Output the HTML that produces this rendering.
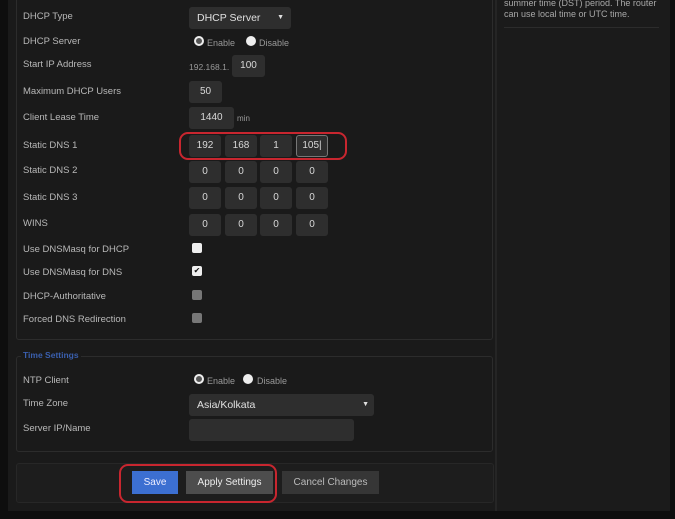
<!DOCTYPE html>
<html><head><style>
*{margin:0;padding:0;box-sizing:border-box}
body{width:675px;height:519px;background:#0e0e0e;position:relative;overflow:hidden;font-family:"Liberation Sans",sans-serif;color:#bdbdbd}
.a{position:absolute}
.lbl{position:absolute;left:23px;font-size:9.5px;color:#b8b8b8}
.in{position:absolute;background:#2e2e2e;border-radius:3px;color:#d8d8d8;font-size:10px;text-align:center;height:22px;line-height:22px}
.cb{position:absolute;left:192px;width:10px;height:10px;border-radius:2px;background:#777}
.rd{position:absolute;width:10px;height:10px;border-radius:50%;background:#eee}
.rt{position:absolute;font-size:9px;color:#999}
.red{position:absolute;border:2px solid #c8262f;border-radius:9px}
</style></head><body>
<div class="a" style="left:8px;top:0;width:487px;height:511px;background:#1a1a1a"></div>
<div class="a" style="left:495px;top:0;width:175px;height:511px;background:#1b1b1b;border-left:2px solid #252525"></div>
<div class="a" style="left:504px;top:-2px;font-size:9px;color:#a8a8a8;line-height:11px">summer time (DST) period. The router<br>can use local time or UTC time.</div>
<div class="a" style="left:504px;top:27px;width:155px;height:1px;background:#2c2c2c"></div>
<div class="a" style="left:16px;top:-5px;width:477px;height:345px;border:1px solid #2c2c2c;border-radius:3px"></div>
<div class="a" style="left:16px;top:356px;width:477px;height:96px;border:1px solid #2c2c2c;border-radius:3px"></div>
<div class="a" style="left:21px;top:350px;background:#1a1a1a;padding:0 2px;font-size:8.5px;font-weight:bold;color:#3a5fae">Time Settings</div>
<div class="a" style="left:16px;top:463px;width:478px;height:40px;background:#1d1d1d;border:1px solid #272727;border-radius:3px"></div>

<div class="lbl" style="top:11px">DHCP Type</div>
<div class="lbl" style="top:36px">DHCP Server</div>
<div class="lbl" style="top:59px">Start IP Address</div>
<div class="lbl" style="top:86px">Maximum DHCP Users</div>
<div class="lbl" style="top:112px">Client Lease Time</div>
<div class="lbl" style="top:140px">Static DNS 1</div>
<div class="lbl" style="top:165px">Static DNS 2</div>
<div class="lbl" style="top:192px">Static DNS 3</div>
<div class="lbl" style="top:218px">WINS</div>
<div class="lbl" style="top:244px">Use DNSMasq for DHCP</div>
<div class="lbl" style="top:267px">Use DNSMasq for DNS</div>
<div class="lbl" style="top:291px">DHCP-Authoritative</div>
<div class="lbl" style="top:314px">Forced DNS Redirection</div>
<div class="lbl" style="top:375px">NTP Client</div>
<div class="lbl" style="top:398px">Time Zone</div>
<div class="lbl" style="top:423px">Server IP/Name</div>

<div class="in" style="left:189px;top:7px;width:102px;text-align:left;padding-left:8px;font-size:10.5px;color:#e0e0e0">DHCP Server<span style="position:absolute;right:7px;font-size:7px">▼</span></div>
<div class="rd" style="left:194px;top:36px;border:2.5px solid #eee;background:#555"></div><div class="rt" style="left:207px;top:38px">Enable</div>
<div class="rd" style="left:246px;top:36px"></div><div class="rt" style="left:259px;top:38px">Disable</div>
<div class="rt" style="left:189px;top:62px;font-size:8.5px">192.168.1.</div>
<div class="in" style="left:232px;top:55px;width:33px">100</div>
<div class="in" style="left:189px;top:81px;width:33px">50</div>
<div class="in" style="left:189px;top:107px;width:45px">1440</div>
<div class="rt" style="left:237px;top:114px;font-size:8px">min</div>

<div class="in" style="left:189px;top:135px;width:32px">192</div>
<div class="in" style="left:225px;top:135px;width:32px">168</div>
<div class="in" style="left:260px;top:135px;width:32px">1</div>
<div class="in" style="left:296px;top:135px;width:32px;border:1px solid #777;line-height:20px">105|</div>
<div class="red" style="left:179px;top:132px;width:168px;height:28px"></div>

<div class="in" style="left:189px;top:161px;width:32px">0</div><div class="in" style="left:225px;top:161px;width:32px">0</div><div class="in" style="left:260px;top:161px;width:32px">0</div><div class="in" style="left:296px;top:161px;width:32px">0</div>
<div class="in" style="left:189px;top:187px;width:32px">0</div><div class="in" style="left:225px;top:187px;width:32px">0</div><div class="in" style="left:260px;top:187px;width:32px">0</div><div class="in" style="left:296px;top:187px;width:32px">0</div>
<div class="in" style="left:189px;top:214px;width:32px">0</div><div class="in" style="left:225px;top:214px;width:32px">0</div><div class="in" style="left:260px;top:214px;width:32px">0</div><div class="in" style="left:296px;top:214px;width:32px">0</div>

<div class="cb" style="top:243px;background:#eee"></div>
<div class="cb" style="top:266px;background:#eee;font-size:8px;color:#111;line-height:10px;text-align:center">✔</div>
<div class="cb" style="top:290px"></div>
<div class="cb" style="top:313px"></div>

<div class="rd" style="left:194px;top:374px;border:2.5px solid #eee;background:#555"></div><div class="rt" style="left:207px;top:376px">Enable</div>
<div class="rd" style="left:243px;top:374px"></div><div class="rt" style="left:257px;top:376px">Disable</div>
<div class="in" style="left:189px;top:394px;width:185px;text-align:left;padding-left:8px;font-size:10.5px;color:#e0e0e0">Asia/Kolkata<span style="position:absolute;right:5px;font-size:7px">▼</span></div>
<div class="in" style="left:189px;top:419px;width:165px"></div>

<div class="a" style="left:132px;top:471px;width:46px;height:23px;background:#3c6fd1;color:#eef;font-size:10px;text-align:center;line-height:23px">Save</div>
<div class="a" style="left:186px;top:471px;width:87px;height:23px;background:#4d4d4d;color:#eee;font-size:10px;text-align:center;line-height:23px">Apply Settings</div>
<div class="a" style="left:282px;top:471px;width:97px;height:23px;background:#363636;color:#bbb;font-size:10px;text-align:center;line-height:23px">Cancel Changes</div>
<div class="red" style="left:119px;top:464px;width:158px;height:39px"></div>
</body></html>
